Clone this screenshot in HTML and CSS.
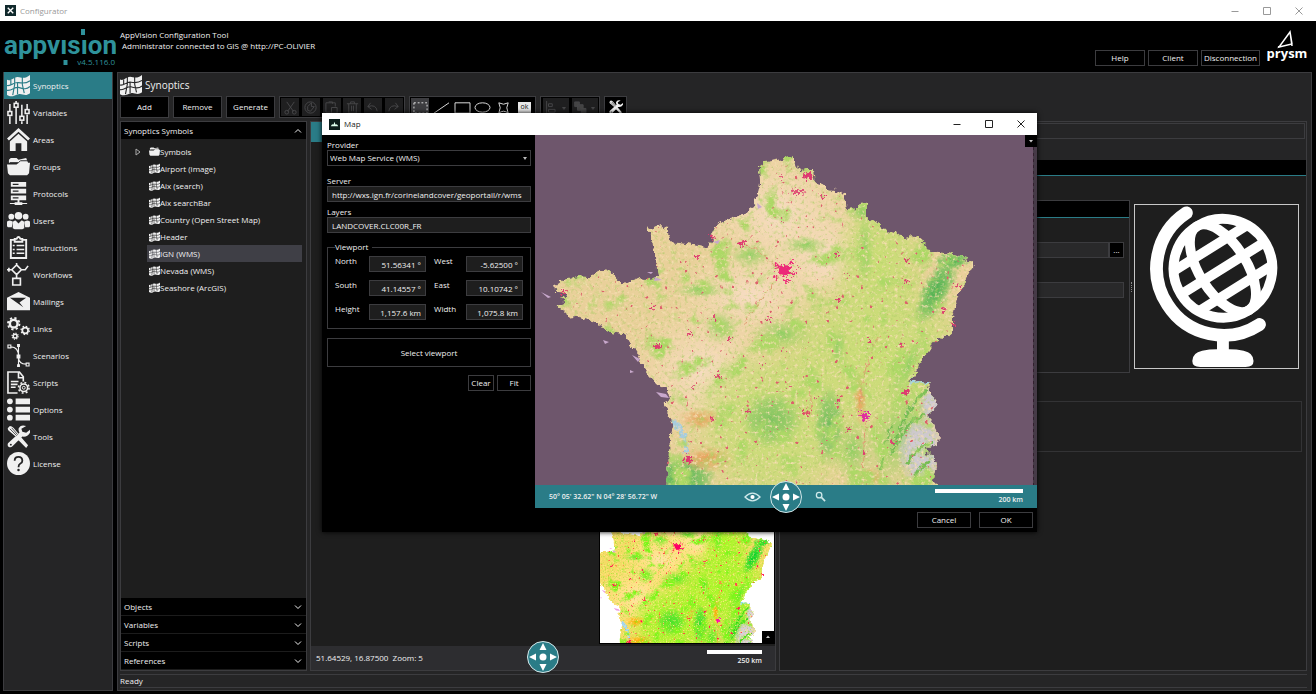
FILE: index.html
```html
<!DOCTYPE html>
<html lang="en">
<head>
<meta charset="utf-8">
<title>Configurator</title>
<link rel="stylesheet" href="styles.css">
</head>
<body>
<svg class="sprite" aria-hidden="true">
  <defs>
    <symbol id="i-map" viewBox="0 0 24 24"><path fill="currentColor" d="M0 6c4 2 7-3 11-3s7 3 13-2v19c-5 4-8 0-12 1s-7 4-12 1z"/><path fill="none" stroke="var(--cut)" stroke-width="1.200" d="M0 12c5 1 7-4 12-3s8 1 12-2M0 17c5 1 8-4 12-3s8 3 12-1M8 3v8l-2 11M16 2v9l2 9M11 9v12M4 6v5"/></symbol>
    <symbol id="i-sliders" viewBox="0 0 24 24"><g fill="none" stroke="currentColor" stroke-width="1.600"><path d="M3 3v8M3 16v8M9.500 0v2M9.500 7v17M15.500 4v12M15.500 21v3M21 3v6M21 14v10"/><rect x="1" y="11" width="4" height="4"/><rect x="7.500" y="2.500" width="4" height="4"/><rect x="13.500" y="16" width="4" height="4"/><rect x="19" y="9" width="4" height="4"/></g></symbol>
    <symbol id="i-home" viewBox="0 0 24 24"><path fill="currentColor" d="M12 0 24 11l-2 2L12 4 2 13l-2-2zM12 6l9 8v10h-6v-8H9v8H3V14z"/></symbol>
    <symbol id="i-folder" viewBox="0 0 24 24"><path fill="currentColor" d="M2 8V5l2-2h6l2 2 8-2 2 5zM0 10h10l2-2h12l-1 11-2 2H3l-2-2z"/><path fill="none" stroke="var(--cut)" d="M3 8h9l2-2h8"/></symbol>
    <symbol id="i-server" viewBox="0 0 24 24"><path fill="currentColor" d="M4 0h16v5H4zM4 7h16v5H4zM4 14h16v5H4zM11 19h2v2h3v1h5v1h-5v1H8v-1H3v-1h5v-1h3z"/><path stroke="var(--cut)" stroke-width="1.300" d="M6 2.500h6M6 9.500h6M6 16.500h6"/></symbol>
    <symbol id="i-users" viewBox="0 0 24 24"><g fill="currentColor"><circle cx="12" cy="7" r="4"/><circle cx="4.500" cy="8" r="3"/><circle cx="19.500" cy="8" r="3"/><path d="M6 20v-5q0-3 3-3l3 3 3-3q3 0 3 3v5l-2 1H8zM0 18v-4q0-2 3-2l3 1-1 6H1zM24 18v-4q0-2-3-2l-3 1 1 6h4z"/></g></symbol>
    <symbol id="i-clipboard" viewBox="0 0 24 24"><path fill="none" stroke="currentColor" stroke-width="2" d="M8 4H4v19h16V4h-4M8 6V3h2q2-4 4 0h2v3z"/><path stroke="currentColor" stroke-width="1.500" d="M6 10h2M10 10h8M6 14h2M10 14h8M6 18h2M10 18h8"/></symbol>
    <symbol id="i-flow" viewBox="0 0 24 24"><path fill="none" stroke="currentColor" stroke-width="1.700" d="m10 2 5 5-5 5-5-5zM10 12v4M6 16h8v7H6zM0 7h5M15 7h4l3-4M2 5v4M10 0v2"/></symbol>
    <symbol id="i-mail" viewBox="0 0 24 24"><path fill="currentColor" d="M0 8 12 2l12 6v13H0z"/><path fill="var(--cut)" d="m3 8 17 0-7 5 4 5-7-5z"/></symbol>
    <symbol id="i-gears" viewBox="0 0 24 24"><g fill="none" stroke="currentColor"><circle cx="7" cy="7" r="4" stroke-width="2.600"/><circle cx="7" cy="7" r="6" stroke-width="2" stroke-dasharray="2.300 2.412"/><circle cx="19" cy="14" r="3" stroke-width="1.800"/><circle cx="19" cy="14" r="4.300" stroke-width="1.400" stroke-dasharray="1.600 1.777"/><circle cx="8.500" cy="20" r="2" stroke-width="1.600"/><circle cx="8.500" cy="20" r="3.200" stroke-width="1.200" stroke-dasharray="1.200 1.313"/></g></symbol>
    <symbol id="i-curve" viewBox="0 0 24 24"><g fill="none" stroke="currentColor" stroke-width="1.200"><path d="M1 1h3v3H1zM20 20h3v3h-3zM4 3q8 0 8 10 0 8 8 8M12 2v20"/></g><path fill="currentColor" d="M10 11h4v4h-4zM10.500 0h3v3h-3zM10.500 21h3v3h-3z"/></symbol>
    <symbol id="i-script" viewBox="0 0 24 24"><path fill="none" stroke="currentColor" stroke-width="1.700" d="M11 23H1V1h12l4 5v5M12 1v6h5M4 11h8M4 14h7M4 17h5"/><g fill="none" stroke="currentColor"><circle cx="17.500" cy="17.500" r="4" stroke-width="1.600"/><circle cx="17.500" cy="17.500" r="5.500" stroke-width="1.700" stroke-dasharray="2 2.319"/><circle cx="17.500" cy="17.500" r="1.500"/></g></symbol>
    <symbol id="i-list" viewBox="0 0 24 24"><g fill="currentColor"><circle cx="3" cy="3.500" r="3"/><circle cx="3" cy="12" r="3"/><circle cx="3" cy="20.500" r="3"/><path d="M9 .5h15v6H9zM9 9h15v6H9zM9 17.500h15v6H9z"/></g></symbol>
    <symbol id="i-tools" viewBox="0 0 24 24"><path fill="currentColor" d="M20 1q-6-2-8 3 0 3 1 4L1 19q-1 3 1 4 2 1 4-1L16 12q5 1 8-4V5l-4 3-4-1-1-3zM1 3l2-2q2 0 4 2l5 6-3 3-6-5Q0 5 1 3zM15 13l7 8-2 3-8-8z"/><path stroke="var(--cut)" fill="none" stroke-width=".8" d="m3 4 7 7M5 3l6 7"/><circle cx="4" cy="20.500" r="1" fill="var(--cut)"/></symbol>
    <symbol id="i-help" viewBox="0 0 24 24"><circle cx="12" cy="12" r="12" fill="currentColor"/><path fill="none" stroke="var(--cut)" stroke-width="1.900" d="M8 9q0-4 4-4t4 4q0 2-2 3t-2 4"/><circle cx="12" cy="18.800" r="1.300" fill="var(--cut)"/></symbol>
    <symbol id="i-chev" viewBox="0 0 8 8"><path fill="none" stroke="currentColor" d="m1 2.500 3 3 3-3"/></symbol>
    <symbol id="i-min" viewBox="0 0 10 10"><path stroke="currentColor" d="M1.500 5.500h7"/></symbol>
    <symbol id="i-max" viewBox="0 0 10 10"><path fill="none" stroke="currentColor" d="M1.500 1.500h7v7h-7z"/></symbol>
    <symbol id="i-close" viewBox="0 0 10 10"><path stroke="currentColor" d="m1.500 1.500 7 7m0-7-7 7"/></symbol>
    <symbol id="i-compass" viewBox="0 0 34 34"><circle cx="17" cy="17" r="15.500" fill="#2a7c87" stroke="#d5e8ea"/><path fill="#fff" d="m17 3 3.500 7h-7zM17 31l3.500-7h-7zM3 17l7-3.500v7zM31 17l-7-3.500v7z"/><circle cx="17" cy="17" r="3.500" fill="#fff"/></symbol>

    <radialGradient id="patch-green"><stop offset="0" stop-color="#8fce62"/><stop offset="1" stop-color="#b0d868" stop-opacity="0"/></radialGradient>
    <radialGradient id="patch-dark"><stop offset="0" stop-color="#4cb052"/><stop offset=".6" stop-color="#70c05c" stop-opacity=".8"/><stop offset="1" stop-color="#98cc64" stop-opacity="0"/></radialGradient>
    <radialGradient id="patch-lime"><stop offset="0" stop-color="#c8de74"/><stop offset=".6" stop-color="#cadc78" stop-opacity=".8"/><stop offset="1" stop-color="#d0dc78" stop-opacity="0"/></radialGradient>
    <radialGradient id="patch-peach"><stop offset="0" stop-color="#f7dcc4"/><stop offset="1" stop-color="#f2d8b0" stop-opacity="0"/></radialGradient>
    <radialGradient id="patch-orange"><stop offset="0" stop-color="#ea9a55"/><stop offset="1" stop-color="#eab070" stop-opacity="0"/></radialGradient>
    <radialGradient id="patch-grey"><stop offset="0" stop-color="#d2ccd4"/><stop offset=".6" stop-color="#cdc8cc"/><stop offset="1" stop-color="#cdc8cc" stop-opacity="0"/></radialGradient>
    <clipPath id="land-clip"><use href="#land-shape"/></clipPath>
    <path id="land-shape" d="M258 20 250 23 237 26 230 27 224 32 225 48 222 62 218 72 208 79 193 84 180 91 175 102 180 104 172 112 153 109 136 107 133 98 133 93 125 91 118 94 110 90 114 100 119 112 121 123 122 137 123 142 113 144 104 143 95 147 86 149 78 138 72 133 60 137 55 142 43 141 30 145 19 149 20 157 32 158 33 163 25 162 30 168 21 172 32 177 34 183 42 182 53 185 66 190 70 195 80 198 92 200 95 210 102 217 105 227 112 238 123 250 133 255 135 265 128 268 133 277 135 285 138 290 135 302 133 328 131 352 405 352 398 345 402 328 393 318 392 313 403 310 404 300 397 285 392 280 402 272 398 262 393 252 395 247 385 246 373 248 382 237 385 227 395 213 402 205 402 201 412 202 418 197 418 182 422 165 427 152 440 128 428 123 417 119 405 117 392 114 387 105 378 99 368 102 360 98 352 96 342 87 332 82 332 68 327 66 322 73 312 75 310 60 302 56 292 55 287 48 280 47 278 35 270 35 264 37 261 30z"/>
    <filter id="terrain" filterUnits="userSpaceOnUse" x="0" y="0" width="502" height="350" color-interpolation-filters="sRGB">
      <feTurbulence type="fractalNoise" baseFrequency=".16" numOctaves="3" seed="4" result="rough"/>
      <feDisplacementMap in="SourceGraphic" in2="rough" scale="8" xChannelSelector="R" yChannelSelector="G" result="land"/>
      <feTurbulence type="fractalNoise" baseFrequency=".045" numOctaves="6" seed="11" result="n1"/>
      <feColorMatrix in="n1" values="0 0 0 0 .68  0 0 0 0 .85  0 0 0 0 .4  0 5 0 0 -2.75" result="wood"/>
      <feTurbulence type="fractalNoise" baseFrequency=".3" numOctaves="3" seed="6" result="n2"/>
      <feColorMatrix in="n2" values="0 0 0 0 .68  0 0 0 0 .8  0 0 0 0 .4  2.200 0 0 0 -1.180" result="field"/>
      <feColorMatrix in="n2" values="0 0 0 0 .97  0 0 0 0 .87  0 0 0 0 .7  0 0 3 0 -1.600" result="pale"/>
      <feTurbulence type="fractalNoise" baseFrequency=".2" numOctaves="2" seed="21" result="n3"/>
      <feColorMatrix in="n3" values="0 0 0 0 .87  0 0 0 0 .38  0 0 0 0 .42  0 0 12 0 -8.800" result="town"/>
      <feMerge result="cover"><feMergeNode in="land"/><feMergeNode in="wood"/><feMergeNode in="field"/><feMergeNode in="pale"/><feMergeNode in="town"/></feMerge>
      <feComposite in="cover" in2="land" operator="in"/>
    </filter>
    <filter id="urban" filterUnits="userSpaceOnUse" x="0" y="0" width="502" height="350" color-interpolation-filters="sRGB">
      <feTurbulence type="fractalNoise" baseFrequency=".4" numOctaves="2" seed="8"/>
      <feDisplacementMap in="SourceGraphic" scale="12" xChannelSelector="R" yChannelSelector="G"/>
    </filter>
    <g id="france">
      <g filter="url(#terrain)">
        <g clip-path="url(#land-clip)">
          <rect width="502" height="352" fill="#e9d09a"/>
          <ellipse cx="245" cy="80" rx="85" ry="75" fill="url(#patch-peach)"/>
          <ellipse cx="290" cy="125" rx="60" ry="60" fill="url(#patch-peach)"/>
          <ellipse cx="215" cy="160" rx="80" ry="50" fill="url(#patch-peach)"/>
          <ellipse cx="170" cy="235" rx="80" ry="70" fill="url(#patch-peach)"/>
          <ellipse cx="345" cy="130" rx="50" ry="75" fill="url(#patch-lime)"/>
          <ellipse cx="340" cy="220" rx="110" ry="90" fill="url(#patch-lime)"/>
          <ellipse cx="240" cy="290" rx="90" ry="90" fill="url(#patch-lime)"/>
          <ellipse cx="327" cy="76" rx="18" ry="15" fill="url(#patch-green)"/>
          <ellipse cx="247" cy="199" rx="34" ry="18" fill="url(#patch-green)"/>
          <ellipse cx="186" cy="192" rx="18" ry="18" fill="url(#patch-green)"/>
          <ellipse cx="165" cy="155" rx="28" ry="8" fill="url(#patch-green)"/>
          <ellipse cx="215" cy="120" rx="22" ry="14" fill="url(#patch-green)"/>
          <ellipse cx="270" cy="110" rx="24" ry="10" fill="url(#patch-green)"/>
          <ellipse cx="330" cy="115" rx="10" ry="40" fill="url(#patch-green)"/>
          <ellipse cx="401" cy="155" rx="15" ry="40" transform="rotate(28 401 155)" fill="url(#patch-dark)"/>
          <ellipse cx="418" cy="126" rx="18" ry="8" fill="url(#patch-dark)"/>
          <ellipse cx="303" cy="212" rx="10" ry="22" fill="url(#patch-green)"/>
          <ellipse cx="372" cy="232" rx="12" ry="42" transform="rotate(30 372 232)" fill="url(#patch-green)"/>
          <ellipse cx="237" cy="285" rx="32" ry="30" fill="url(#patch-dark)" opacity=".6"/>
          <ellipse cx="294" cy="290" rx="16" ry="42" fill="url(#patch-dark)" opacity=".7"/>
          <ellipse cx="318" cy="315" rx="22" ry="35" fill="url(#patch-green)"/>
          <ellipse cx="365" cy="300" rx="32" ry="65" transform="rotate(20 365 300)" fill="url(#patch-green)"/>
          <ellipse cx="386" cy="315" rx="24" ry="36" fill="url(#patch-grey)"/>
          <ellipse cx="397" cy="270" rx="12" ry="20" fill="url(#patch-grey)"/>
          <path d="M355 320q15-30 35-42M362 305q10-35 30-50M372 330q10-20 25-22M345 335q5-30 12-45M380 345q0-12 15-18" fill="none" stroke="#74bc54" stroke-width="3"/>
          <ellipse cx="147" cy="344" rx="36" ry="26" fill="url(#patch-dark)"/>
          <ellipse cx="165" cy="284" rx="22" ry="11" fill="url(#patch-orange)"/>
          <ellipse cx="172" cy="324" rx="30" ry="14" fill="url(#patch-orange)"/>
          <ellipse cx="325" cy="265" rx="7" ry="28" fill="url(#patch-orange)"/>
          <ellipse cx="335" cy="342" rx="16" ry="9" fill="url(#patch-orange)"/>
          <path d="M136 288q12 8 14 32l4-2q-2-24-14-34z" fill="#a7cce0"/>
          <path d="M373 253q10-9 23-3v-7h-20z" fill="#9fd0ea"/>
          <path d="M325 270q2-40 20-70M330 282l-2 67M245 138q-12-18-36-30M248 135q-20 25-40 55M277 280l-2-30" fill="none" stroke="#e09a72"/>
        </g>
      </g>
      <g fill="#c8a8cc"><path d="M121 257l10 2 3 4-8-1zM97 220l8 4-2 3zM112 137h6l-2 2zM6 157l10 5-3 1zM68 205l6 2-4 2zM95 235l4 2-4 1zM120 142l7 3-8 1zM222 68l5 4-4 2zM178 107l7-2-2 4z"/></g>
      <g filter="url(#urban)" fill="#de3a70">
        <g fill="#ec2a78"><circle cx="249" cy="135" r="6"/><circle cx="242" cy="130" r="2"/><circle cx="258" cy="139" r="2"/><circle cx="241" cy="142" r="2"/><circle cx="257" cy="128" r="2"/><circle cx="252" cy="146" r="2"/><circle cx="239" cy="136" r="1"/><circle cx="262" cy="133" r="1"/></g>
        <ellipse cx="273" cy="41" rx="5" ry="3"/><ellipse cx="263" cy="57" rx="8" ry="2" fill="#e05078"/><circle cx="287" cy="62" r="2"/>
        <circle cx="330" cy="281" r="4" fill="#e02fa0"/><circle cx="153" cy="324" r="4"/><circle cx="123" cy="211" r="3"/><circle cx="118" cy="174" r="2"/><circle cx="161" cy="122" r="2"/><circle cx="207" cy="109" r="3"/><circle cx="27" cy="157" r="2"/><circle cx="177" cy="102" r="2"/><circle cx="422" cy="151" r="2"/><circle cx="409" cy="175" r="2"/><circle cx="418" cy="190" r="2"/><circle cx="371" cy="146" r="2"/><circle cx="371" cy="125" r="2"/><circle cx="302" cy="119" r="2"/><circle cx="234" cy="184" r="2"/><circle cx="304" cy="165" r="2"/><circle cx="195" cy="203" r="2"/><circle cx="179" cy="181" r="2"/><circle cx="335" cy="206" r="2"/><circle cx="272" cy="278" r="3" fill="#e05068"/><circle cx="314" cy="294" r="2"/><circle cx="371" cy="257" r="3"/><circle cx="357" cy="307" r="2"/><circle cx="213" cy="276" r="2"/><circle cx="184" cy="241" r="2"/><circle cx="155" cy="199" r="2"/><circle cx="331" cy="319" r="2"/><circle cx="366" cy="209" r="2"/><circle cx="250" cy="217" r="1"/><circle cx="227" cy="230" r="1"/><circle cx="222" cy="308" r="1"/><circle cx="303" cy="265" r="2"/><circle cx="280" cy="263" r="1"/><circle cx="255" cy="251" r="1"/><circle cx="157" cy="252" r="1"/><circle cx="246" cy="85" r="1"/><circle cx="247" cy="42" r="1"/><circle cx="312" cy="137" r="1"/><circle cx="177" cy="284" r="2"/>
      </g>
    </g>
  </defs>
</svg>

<header class="titlebar">
  <svg class="app-icon" viewBox="0 0 12 12"><rect width="12" height="12" fill="#10292c"/><path d="m3 3 6 6M9 3 3 9" stroke="#fff" stroke-width="1.500"/></svg>
  <span class="titlebar-text">Configurator</span>
  <button class="win-btn" aria-label="Minimize"><svg><use href="#i-min"/></svg></button>
  <button class="win-btn" aria-label="Maximize"><svg><use href="#i-max"/></svg></button>
  <button class="win-btn" aria-label="Close"><svg><use href="#i-close"/></svg></button>
</header>

<div class="banner">
  <svg class="logo" viewBox="0 0 112 44" role="img" aria-label="appvision v4.5.116.0">
    <text class="logo-name" x="0" y="31">appvısıon</text>
    <path d="M59.500 37h4v5h-4zM77 6h4v6h-4z" fill="#2f929b"/>
    <text class="logo-version" x="111" y="42" text-anchor="end">v4.5.116.0</text>
  </svg>
  <div class="session"><div>AppVision Configuration Tool</div><div class="session-user">Administrator connected to GIS @ http://PC-OLIVIER</div></div>
  <div class="banner-actions">
    <button class="btn">Help</button><button class="btn">Client</button><button class="btn btn-long">Disconnection</button>
  </div>
  <svg class="prysm" viewBox="0 0 42 36" role="img" aria-label="prysm"><path d="M24 2 13 17l13-3zM24 2l2 14M12 17l3-1" fill="none" stroke="#fff" stroke-width="1.500"/><text x="21" y="28" text-anchor="middle">prysm</text></svg>
</div>

<div class="workspace">
  <nav class="sidebar">
    <a class="nav-item active" href="#"><svg><use href="#i-map"/></svg>Synoptics</a>
    <a class="nav-item" href="#"><svg><use href="#i-sliders"/></svg>Variables</a>
    <a class="nav-item" href="#"><svg><use href="#i-home"/></svg>Areas</a>
    <a class="nav-item" href="#"><svg><use href="#i-folder"/></svg>Groups</a>
    <a class="nav-item" href="#"><svg><use href="#i-server"/></svg>Protocols</a>
    <a class="nav-item" href="#"><svg><use href="#i-users"/></svg>Users</a>
    <a class="nav-item" href="#"><svg><use href="#i-clipboard"/></svg>Instructions</a>
    <a class="nav-item" href="#"><svg><use href="#i-flow"/></svg>Workflows</a>
    <a class="nav-item" href="#"><svg><use href="#i-mail"/></svg>Mailings</a>
    <a class="nav-item" href="#"><svg><use href="#i-gears"/></svg>Links</a>
    <a class="nav-item" href="#"><svg><use href="#i-curve"/></svg>Scenarios</a>
    <a class="nav-item" href="#"><svg><use href="#i-script"/></svg>Scripts</a>
    <a class="nav-item" href="#"><svg><use href="#i-list"/></svg>Options</a>
    <a class="nav-item" href="#"><svg><use href="#i-tools"/></svg>Tools</a>
    <a class="nav-item" href="#"><svg><use href="#i-help"/></svg>License</a>
  </nav>

  <main class="main">
    <h1 class="page-title"><svg><use href="#i-map"/></svg>Synoptics</h1>
    <div class="toolbar">
      <button class="btn btn-tool">Add</button><button class="btn btn-tool">Remove</button><button class="btn btn-tool">Generate</button>
      <div class="tool-group edit-group">
        <button class="tool off" aria-label="Cut"><svg viewBox="0 0 16 16"><path d="m4 2 7 10M12 2 5 12"/><circle cx="4" cy="13" r="2"/><circle cx="12" cy="13" r="2"/></svg></button>
        <button class="tool off" aria-label="Copy"><svg viewBox="0 0 16 16"><circle cx="8" cy="8" r="6"/><path d="M5 11V7l4-4v4l3 0-4 5z"/></svg></button>
        <button class="tool off" aria-label="Paste"><svg viewBox="0 0 16 16"><path d="M7 13H2V3h10v4M5 2h4v2M8 8h6v6H8z"/></svg></button>
        <button class="tool off" aria-label="Delete"><svg viewBox="0 0 16 16"><path d="M2 4h12M6 4V2h4v2M4 4v10h8V4M7 6v6M9 6v6"/></svg></button>
        <button class="tool off" aria-label="Undo"><svg viewBox="0 0 16 16"><path d="M6 3 3 7l4 3M3 7q9-3 10 5"/></svg></button>
        <button class="tool off" aria-label="Redo"><svg viewBox="0 0 16 16"><path d="m10 3 3 4-4 3M13 7Q4 4 3 12"/></svg></button>
      </div>
      <div class="tool-group draw-group">
        <button class="tool chosen" aria-label="Select"><svg viewBox="0 0 18 16"><path d="M2 3h14v11H2z" stroke-dasharray="2 2"/></svg></button>
        <button class="tool" aria-label="Line"><svg viewBox="0 0 18 16"><path d="M1 14 17 3"/></svg></button>
        <button class="tool" aria-label="Rectangle"><svg viewBox="0 0 18 16"><path d="M1 3h16v11H1z"/></svg></button>
        <button class="tool" aria-label="Ellipse"><svg viewBox="0 0 18 16"><ellipse cx="9" cy="8" rx="8" ry="5"/></svg></button>
        <button class="tool" aria-label="Polygon"><svg viewBox="0 0 18 16"><path d="M4 3q5 3 10 0-3 5 0 11-5-4-10 0 3-6 0-11z"/></svg></button>
        <button class="tool"><span class="ok-chip">ok</span></button>
      </div>
      <div class="tool-group align-group">
        <button class="tool off" aria-label="Align"><svg viewBox="0 0 26 16"><path d="M3 1v14M5 4h4v3H5zM5 10h7v3H5z"/><path d="m20 8 3 0-1.500 2z"/></svg></button>
        <button class="tool off" aria-label="Order"><svg viewBox="0 0 26 16"><path d="M2 2h5v5H2zM5 5h6v6H5zM9 9h5v5H9z" fill="#444"/><path d="m20 8 3 0-1.500 2z"/></svg></button>
      </div>
      <button class="tool-group wrench" aria-label="Settings"><svg><use href="#i-tools"/></svg></button>
    </div>

    <div class="columns">
      <section class="explorer">
        <button class="section-head">Synoptics Symbols<svg class="up"><use href="#i-chev"/></svg></button>
        <ul class="tree">
          <li class="tree-item"><svg class="twist" viewBox="0 0 8 8"><path d="m2 1 4 3-4 3z" fill="none" stroke="#aaa"/></svg><svg><use href="#i-folder"/></svg>Symbols</li>
          <li class="tree-item"><svg><use href="#i-map"/></svg>Airport (image)</li>
          <li class="tree-item"><svg><use href="#i-map"/></svg>Aix (search)</li>
          <li class="tree-item"><svg><use href="#i-map"/></svg>Aix searchBar</li>
          <li class="tree-item"><svg><use href="#i-map"/></svg>Country (Open Street Map)</li>
          <li class="tree-item"><svg><use href="#i-map"/></svg>Header</li>
          <li class="tree-item selected"><svg><use href="#i-map"/></svg>IGN (WMS)</li>
          <li class="tree-item"><svg><use href="#i-map"/></svg>Nevada (WMS)</li>
          <li class="tree-item"><svg><use href="#i-map"/></svg>Seashore (ArcGIS)</li>
        </ul>
        <button class="section-head">Objects<svg><use href="#i-chev"/></svg></button>
        <button class="section-head">Variables<svg><use href="#i-chev"/></svg></button>
        <button class="section-head">Scripts<svg><use href="#i-chev"/></svg></button>
        <button class="section-head">References<svg><use href="#i-chev"/></svg></button>
      </section>

      <section class="editor">
        <div class="editor-tab"></div>
        <div class="canvas">
          <div class="preview">
            <svg class="preview-map" viewBox="94 -21 348 348"><rect x="94" y="-21" width="348" height="348" fill="#fff"/><use href="#france"/></svg>
            <button class="corner-btn" aria-label="Collapse"><svg viewBox="0 0 12 12"><path d="m4 7 2-2.500L8 7z" fill="#ccc"/></svg></button>
          </div>
        </div>
        <div class="editor-status">
          <span>51.64529, 16.87500&nbsp; Zoom: 5</span>
          <svg class="compass"><use href="#i-compass"/></svg>
          <span class="scale"><i class="scale-bar small"></i>250 km</span>
        </div>
      </section>

      <section class="properties">
        <div class="prop-search"></div>
        <div class="prop-head"></div>
        <div class="prop-body">
          <div class="prop-grid">
            <div class="prop-fields">
              <div class="field-head"></div>
              <div class="field-row"><input aria-label="Image"><button class="more" aria-label="Browse">...</button></div>
              <div class="field-row"><input aria-label="Description"></div>
            </div>
            <div class="grip"></div>
            <div class="thumb">
              <svg viewBox="0 0 165 165"><g fill="none" stroke="#fff"><path stroke-width="13" stroke-linecap="round" d="M52 8A67 67 0 0 0 33 101A67 67 0 0 0 126 121"/><g stroke-width="10" transform="translate(89 64) rotate(-32)"><circle r="50"/><ellipse rx="24" ry="50"/><path d="M-44-24h88M-50 0H50M-44 24h88"/></g></g><path fill="#fff" d="M83 136h12v10q8 0 15 1.500 10 2 10 10.500 0 6-8 6H66q-8 0-8-6 0-8.500 10-10.500 7-1.500 15-1.500z"/></svg>
            </div>
          </div>
          <div class="prop-box"></div>
        </div>
      </section>
    </div>
    <footer class="statusbar">Ready</footer>
  </main>
</div>

<div class="dialog" role="dialog" aria-label="Map">
  <div class="dialog-title">
    <svg class="dialog-icon" viewBox="0 0 12 12"><rect width="12" height="12" fill="#0b1d1c"/><path d="M2 8q1-3 3-2l1-3 1 3q2-1 3 2z" fill="#dfe"/></svg>
    <span class="titlebar-text">Map</span>
    <button class="win-btn" aria-label="Minimize"><svg><use href="#i-min"/></svg></button>
    <button class="win-btn" aria-label="Maximize"><svg><use href="#i-max"/></svg></button>
    <button class="win-btn" aria-label="Close"><svg><use href="#i-close"/></svg></button>
  </div>
  <div class="dialog-body">
    <form class="form">
      <label for="provider">Provider</label>
      <div class="select-wrap"><select id="provider"><option>Web Map Service (WMS)</option></select></div>
      <label class="gap-top" for="server">Server</label>
      <input class="text" id="server" value="http://wxs.ign.fr/corinelandcover/geoportail/r/wms">
      <label for="layers">Layers</label>
      <input class="text" id="layers" value="LANDCOVER.CLC00R_FR">
      <fieldset class="viewport">
        <legend>Viewport</legend>
        <label for="n">North</label><input id="n" value="51.56341 °"><label for="w">West</label><input id="w" value="-5.62500 °">
        <label for="s">South</label><input id="s" value="41.14557 °"><label for="e">East</label><input id="e" value="10.10742 °">
        <label for="h">Height</label><input id="h" value="1,157.6 km"><label for="wd">Width</label><input id="wd" value="1,075.8 km">
      </fieldset>
      <button type="button" class="btn btn-select">Select viewport</button>
      <div class="form-actions"><button type="button" class="btn btn-clear">Clear</button><button type="button" class="btn btn-fit">Fit</button></div>
    </form>
    <div class="map-pane">
      <div class="map-view">
        <svg class="map" viewBox="0 0 502 350" preserveAspectRatio="xMidYMid slice"><rect width="502" height="350" fill="#6e566c"/><use href="#france"/><rect x="498" width="4" height="350" fill="#463a47"/><path d="M498.500 0v350" stroke="#33202f" stroke-dasharray="3 3"/></svg>
        <button class="corner-btn top" aria-label="Expand"><svg viewBox="0 0 12 12"><path d="m4 5 2 2.500L8 5z" fill="#ccc"/></svg></button>
      </div>
      <div class="map-bar">
        <span class="coords">50° 05' 32.62" N 04° 28' 56.72" W</span>
        <div class="map-tools">
          <svg class="eye" viewBox="0 0 18 10"><path d="M1 5q8-8 16 0-8 8-16 0z" fill="none" stroke="#cfe9ea" stroke-width="1.300"/><circle cx="9" cy="5" r="2.200" fill="#fff"/></svg>
          <svg class="compass-inline"><use href="#i-compass"/></svg>
          <svg class="lens" viewBox="0 0 12 12"><circle cx="4.500" cy="4.500" r="3" fill="none" stroke="#cfe9ea" stroke-width="1.400"/><path d="m7 7 4 4" stroke="#cfe9ea" stroke-width="1.800"/></svg>
        </div>
        <span class="scale"><i class="scale-bar"></i>200 km</span>
      </div>
    </div>
  </div>
  <div class="dialog-foot"><button class="btn">Cancel</button><button class="btn">OK</button></div>
</div>
</body>
</html>
```
FILE: styles.css
```css
* { box-sizing: border-box; }
:root { --teal: #2a7c87; --panel: #252526; --dark: #1e1e1e; --line: #3c3c3f; --cut: #252526; }
body { margin: 0; height: 100vh; display: flex; flex-direction: column; overflow: hidden; background: #000; color: #f0f0f0; font: 8px/12px "Open Sans", "Noto Sans", sans-serif; }
button, input, select { font: inherit; color: inherit; margin: 0; }
button { padding: 0; border: 0; background: none; }
svg { display: block; flex: none; }
.sprite { position: absolute; width: 0; height: 0; }

.titlebar, .dialog-title { display: flex; align-items: center; flex: none; height: 22px; background: #fff; color: #999; }
.titlebar { height: 21px; padding: 0 1px 0 5px; }
.titlebar-text { flex: 1; padding-left: 4px; font-size: 8px; }
.app-icon { width: 11px; height: 11px; }
.win-btn { width: 32px; height: 20px; display: grid; place-items: center; }
.win-btn svg { width: 10px; height: 10px; }

.banner { display: flex; flex: none; height: 51px; padding: 0 8px 0 4px; }
.logo { width: 112px; height: 44px; margin-top: 2px; }
.logo-name { font: 700 26px Roboto, sans-serif; fill: #2f929b; }
.logo-version { font: 8px "Open Sans", sans-serif; fill: #2f929b; }
.session { flex: 1; padding: 8px 0 0 4px; line-height: 11px; }
.session-user { padding-left: 2px; }
.banner-actions { display: flex; gap: 3px; padding-top: 29px; }
.btn { height: 16px; min-width: 50px; border: 1px solid var(--line); background: #000; }
.btn-long { min-width: 59px; }
.prysm { width: 42px; height: 36px; margin: 9px 0 0 6px; }
.prysm text { font: 700 13px "Open Sans", sans-serif; fill: #fff; }

.workspace { flex: 1; min-height: 0; display: flex; gap: 4px; padding: 0 4px 3px 3px; }
.sidebar { width: 110px; flex: none; background: var(--panel); border: 1px solid var(--line); border-top: 0; }
.nav-item { display: flex; align-items: center; gap: 3px; height: 27px; padding-left: 3px; color: inherit; text-decoration: none; }
.nav-item svg { width: 23px; height: 23px; }
.nav-item.active { background: var(--teal); --cut: var(--teal); }
.main { flex: 1; min-width: 0; display: flex; flex-direction: column; background: var(--panel); border: 1px solid var(--line); padding: 0 4px 2px 2px; }
.page-title { display: flex; align-items: center; gap: 3px; height: 23px; flex: none; margin: 0; font-size: 10px; font-weight: 400; }
.page-title svg { width: 22px; height: 22px; }

.toolbar { display: flex; flex: none; gap: 4px; height: 22px; }
.btn-tool { height: 22px; width: 49px; min-width: 49px; }
.tool-group { display: flex; align-items: center; justify-content: space-around; background: #000; border: 1px solid var(--line); }
.edit-group { width: 126px; }
.draw-group { width: 127px; }
.align-group { width: 60px; }
.wrench { width: 23px; --cut: #000; }
.wrench svg { width: 14px; height: 14px; }
.tool { width: 18px; height: 18px; display: grid; place-items: center; }
.tool svg { width: 17px; height: 15px; fill: none; stroke: #e8e8e8; }
.tool.off { background: #1f1f20; }
.tool.off svg { stroke: #47474a; }
.align-group .tool, .align-group .tool svg { width: 26px; }
.tool.chosen { background: #3d3d40; }
.ok-chip { width: 13px; height: 11px; background: #e8e8e8; color: #111; font-size: 7px; line-height: 10px; }

.columns { flex: 1; min-height: 0; display: flex; gap: 3px; padding-top: 3px; }
.explorer { width: 187px; flex: none; display: flex; flex-direction: column; background: var(--dark); border: 1px solid var(--line); --cut: var(--dark); }
.section-head { display: flex; align-items: center; justify-content: space-between; flex: none; height: 18px; padding: 0 4px 0 3px; background: #000; border-bottom: 1px solid #1c1c1c; text-align: left; }
.section-head svg { width: 8px; height: 8px; }
.section-head .up { transform: rotate(180deg); }
.tree { flex: 1; list-style: none; margin: 0; padding: 3px 4px 0 26px; }
.tree-item { position: relative; display: flex; align-items: center; height: 17px; padding-left: 2px; }
.tree-item svg { width: 11px; height: 11px; }
.tree-item .twist { position: absolute; left: -13px; width: 8px; height: 8px; }
.tree-item.selected { background: #3f3f46; --cut: #3f3f46; }

.editor { flex: 1; min-width: 0; display: flex; flex-direction: column; background: var(--dark); border: 1px solid var(--line); }
.editor-tab { height: 20px; width: 80px; background: var(--teal); }
.canvas { flex: 1; display: flex; align-items: flex-end; justify-content: flex-end; padding: 0 0 2px; }
.preview { position: relative; border: 1px solid #000; }
.preview-map { width: 174px; height: 174px; filter: hue-rotate(9deg) saturate(180%) contrast(108%); }
.corner-btn { position: absolute; right: 0; bottom: 0; width: 12px; height: 12px; background: #000; }
.corner-btn.top { top: 0; bottom: auto; }
.editor-status { position: relative; display: flex; align-items: center; justify-content: space-between; height: 24px; padding: 0 13px 0 5px; background: #2d2d30; }
.compass { position: absolute; left: 50%; top: -6px; width: 34px; height: 34px; margin-left: -17px; }
.scale { justify-self: end; display: flex; flex-direction: column; align-items: flex-end; font-size: 7px; line-height: 10px; font-weight: 600; }
.scale-bar { width: 88px; height: 4px; margin-bottom: 2px; background: #fff; }
.scale-bar.small { width: 55px; }

.properties { width: 528px; flex: none; display: flex; flex-direction: column; border: 1px solid var(--line); }
.prop-search { height: 16px; margin: 1px 1px 21px; border: 1px solid var(--line); flex: none; }
.prop-head { height: 16px; flex: none; background: #000; border-bottom: 1px solid var(--teal); }
.prop-body { flex: 1; background: var(--dark); padding: 24px 4px 0 8px; }
.prop-grid { display: grid; grid-template-columns: 1fr 4px 165px; margin-right: 3px; }
.prop-fields { height: 173px; border: 1px solid var(--line); }
.field-head { height: 17px; background: #000; border-bottom: 1px solid var(--teal); }
.field-row { display: flex; height: 16px; margin: 24px 5px 0 80px; }
.field-row input { flex: 1; min-width: 0; background: #29292a; border: 1px solid var(--line); }
.field-row .more { width: 15px; background: #000; border: 1px solid var(--line); }
.grip { border-left: 1px dotted #888; height: 10px; align-self: center; margin-left: 1px; }
.thumb { height: 165px; margin-top: 4px; border: 1px solid #c8c8c8; }
.prop-box { height: 51px; margin-top: 28px; border: 1px solid #333335; }
.statusbar { height: 14px; flex: none; margin-top: 3px; line-height: 12px; border: solid var(--line); border-width: 1px 0; }

.dialog { position: absolute; left: 322px; top: 113px; width: 715px; background: #000; box-shadow: 0 0 5px #000; }
.dialog-title { padding: 0 0 0 7px; color: #222; }
.dialog-icon { width: 11px; height: 11px; }
.dialog-body { display: flex; }
.form { width: 213px; flex: none; display: flex; flex-direction: column; padding: 5px 4px 0 5px; }
.form label { height: 10px; line-height: 10px; }
.form .gap-top { margin-top: 10px; }
.select-wrap { position: relative; height: 16px; }
.select-wrap select { display: block; appearance: none; width: 100%; height: 16px; padding: 0 2px; background: #000; border: 1px solid var(--line); }
.select-wrap::after { content: ""; position: absolute; right: 4px; top: 7px; border: solid transparent; border-width: 3px 2px 0; border-top-color: #bbb; }
.form input { height: 16px; min-width: 0; padding: 0 4px; background: var(--dark); border: 1px solid var(--line); }
.form .text { margin-bottom: 5px; }
.viewport { display: grid; grid-template-columns: 34px 57px 32px 57px; row-gap: 8px; height: 87px; margin: 4px 0 0; padding: 4px 7px 0; border: 1px solid var(--line); }
.viewport legend { padding: 0 4px 0 0; line-height: 10px; }
.viewport input { text-align: right; }
.viewport label:nth-of-type(even) { padding-left: 8px; margin-right: -8px; }
.viewport input:nth-of-type(even) { margin-left: 8px; margin-right: -8px; }
.btn-select { height: 29px; margin-top: 9px; }
.form-actions { display: flex; justify-content: flex-end; gap: 3px; margin-top: 8px; }
.btn-clear { min-width: 26px; }
.btn-fit { min-width: 34px; }
.map-pane { flex: 1; min-width: 0; }
.map-view { position: relative; }
.map { width: 100%; height: auto; }
.map-bar { display: grid; grid-template-columns: 1fr auto 1fr; align-items: center; height: 23px; padding: 0 14px; background: var(--teal); }
.coords { font-size: 7px; font-weight: 600; }
.map-tools { display: flex; align-items: center; gap: 8px; }
.eye { width: 17px; height: 10px; }
.compass-inline { position: relative; width: 34px; height: 34px; margin: -6px 0; }
.lens { width: 11px; height: 11px; margin: 0 2px 0 4px; }
.dialog-foot { display: flex; justify-content: flex-end; gap: 8px; padding: 4px 4px; }
.dialog-foot .btn { width: 54px; }
```
